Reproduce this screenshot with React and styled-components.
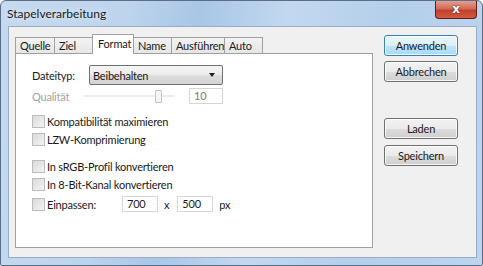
import React from "react";
import styled, { createGlobalStyle, css } from "styled-components";

const GlobalStyle = createGlobalStyle`
  html, body {
    margin: 0;
    padding: 0;
    background: #ffffff;
  }
  body {
    font-family: Lato, "Open Sans", "Liberation Sans", sans-serif;
    font-size: 11px;
    letter-spacing: -0.2px;
    color: #1a1a1a;
  }
`;

const Window = styled.div`
  width: 483px;
  height: 266px;
  box-sizing: border-box;
  border: 1px solid #5a6f87;
  border-radius: 6px 6px 2px 2px;
  background: linear-gradient(
    100deg,
    #c5daf0 0%,
    #bcd4ec 25%,
    #a9c6e6 38%,
    #c2d8ef 55%,
    #b4cfeb 75%,
    #bdd5ee 100%
  );
  display: flex;
  flex-direction: column;
  overflow: hidden;
`;

const TitleBar = styled.div`
  height: 25px;
  display: flex;
  align-items: flex-start;
  justify-content: space-between;
  padding-left: 6px;
`;

const Title = styled.span`
  margin-top: 5px;
  font-size: 12px;
  letter-spacing: 0;
  color: #1a1a1a;
  text-shadow: 0 0 6px rgba(255, 255, 255, 0.9);
`;

const CloseButton = styled.div`
  width: 42px;
  height: 18px;
  margin-right: 5px;
  box-sizing: border-box;
  border: 1px solid #5e1f1a;
  border-top: none;
  border-radius: 0 0 4px 4px;
  background: linear-gradient(#e2a090 0%, #d26a56 45%, #c2412b 55%, #d05a3e 100%);
  color: #ffffff;
  font-family: "DejaVu Sans", sans-serif;
  font-weight: bold;
  font-size: 12px;
  line-height: 16px;
  text-align: center;
  text-shadow: 0 0 2px #4a120c;
`;

const Client = styled.div`
  flex: 1;
  margin: 0 5px 7px 7px;
  background: #f0f0f0;
  border: 1px solid #97adc6;
  display: flex;
  padding: 7px 18px 9px 6px;
`;

const TabArea = styled.div`
  width: 358px;
  display: flex;
  flex-direction: column;
`;

const TabStrip = styled.div`
  height: 19px;
  display: flex;
  align-items: flex-end;
  padding-left: 1px;
  position: relative;
  z-index: 1;
`;

const Tab = styled.div`
  box-sizing: border-box;
  height: 16px;
  width: ${(p) => p.w}px;
  border: 1px solid #a0a0a0;
  border-bottom: none;
  margin-left: -1px;
  padding-left: 4px;
  line-height: 15px;
  white-space: nowrap;
  background: linear-gradient(#f3f3f3, #e6e6e6);

  ${(p) =>
    p.active &&
    css`
      height: 20px;
      margin-bottom: -1px;
      background: #ffffff;
      padding-left: 5px;
      line-height: 17px;
      z-index: 2;
      position: relative;
    `}
`;

const Panel = styled.div`
  flex: 1;
  box-sizing: border-box;
  background: #ffffff;
  border: 1px solid #a0a0a0;
  padding: 11px 0 0 16px;
  display: flex;
  flex-direction: column;
`;

const FieldRow = styled.div`
  display: flex;
  align-items: center;
  height: ${(p) => p.h || 18}px;
  margin-top: ${(p) => p.mt || 0}px;
`;

const Label = styled.span`
  width: ${(p) => p.w}px;
  color: ${(p) => (p.disabled ? "#a3a3a3" : "#1a1a1a")};
  white-space: nowrap;
`;

const Select = styled.div`
  box-sizing: border-box;
  width: 134px;
  height: 20px;
  border: 1px solid #707070;
  border-radius: 2px;
  background: linear-gradient(#f4f4f4 0%, #ececec 50%, #dedede 51%, #d3d3d3 100%);
  display: flex;
  align-items: center;
  justify-content: space-between;
  padding: 0 7px 0 3px;
`;

const Arrow = styled.span`
  width: 0;
  height: 0;
  border-left: 3.5px solid transparent;
  border-right: 3.5px solid transparent;
  border-top: 4px solid #1e1e1e;
`;

const Slider = styled.div`
  width: 90px;
  height: 16px;
  margin: 0 15px 0 -5px;
  position: relative;
  display: flex;
  align-items: center;
`;

const Track = styled.div`
  width: 100%;
  height: 2px;
  background: #e2e2e2;
  border: 1px solid #ededed;
  box-sizing: border-box;
`;

const Thumb = styled.div`
  position: absolute;
  left: 71px;
  top: 2px;
  width: 5px;
  height: 11px;
  border: 1px solid #c4c4c4;
  border-radius: 1px;
  background: #f4f4f4;
`;

const TextBox = styled.div`
  box-sizing: border-box;
  width: ${(p) => p.w}px;
  height: 16px;
  border: 1px solid #d6d6d6;
  background: #ffffff;
  padding-left: 4px;
  line-height: 14px;
  color: ${(p) => (p.disabled ? "#7a7a7a" : "#1a1a1a")};
`;

const Check = styled.span`
  box-sizing: border-box;
  width: 13px;
  height: 13px;
  border: 1px solid #bcbcbc;
  background: linear-gradient(135deg, #dadada, #f3f3f3);
  margin-right: 2px;
  flex: none;
`;

const Small = styled.span`
  margin: 0 ${(p) => p.mr || 0}px 0 ${(p) => p.ml || 0}px;
`;

const ButtonColumn = styled.div`
  margin-left: 11px;
  margin-top: 1px;
  display: flex;
  flex-direction: column;
  gap: 5px;
`;

const Button = styled.div`
  box-sizing: border-box;
  width: 74px;
  height: 21px;
  border: 1px solid ${(p) => (p.primary ? "#3c7fb1" : "#707070")};
  border-radius: 3px;
  background: ${(p) =>
    p.primary
      ? "linear-gradient(#eaf6fd 0%, #d9f0fc 50%, #bee6fd 51%, #a7d9f5 100%)"
      : "linear-gradient(#f2f2f2 0%, #ebebeb 50%, #dddddd 51%, #cfcfcf 100%)"};
  box-shadow: inset 0 0 0 1px rgba(255, 255, 255, 0.8);
  text-align: center;
  line-height: 19px;
  margin-top: ${(p) => p.mt || 0}px;
`;

const tabs = [
  { name: "Quelle", w: 40 },
  { name: "Ziel", w: 39 },
  { name: "Format", w: 42, active: true },
  { name: "Name", w: 39 },
  { name: "Ausführen", w: 54 },
  { name: "Auto", w: 39 },
];

const checkRows = [
  { label: "Kompatibilität maximieren", mt: 8 },
  { label: "LZW-Komprimierung" },
  { label: "In sRGB-Profil konvertieren", mt: 9 },
  { label: "In 8-Bit-Kanal konvertieren" },
];

export default function App() {
  return (
    <>
      <GlobalStyle />
      <Window>
        <TitleBar>
          <Title>Stapelverarbeitung</Title>
          <CloseButton>x</CloseButton>
        </TitleBar>
        <Client>
          <TabArea>
            <TabStrip>
              {tabs.map((t) => (
                <Tab key={t.name} w={t.w} active={t.active}>
                  {t.name}
                </Tab>
              ))}
            </TabStrip>
            <Panel>
              <FieldRow h={20}>
                <Label w={57}>Dateityp:</Label>
                <Select>
                  <span>Beibehalten</span>
                  <Arrow />
                </Select>
              </FieldRow>
              <FieldRow h={16} mt={3}>
                <Label w={57} disabled>
                  Qualität
                </Label>
                <Slider>
                  <Track />
                  <Thumb />
                </Slider>
                <TextBox w={34} disabled>
                  10
                </TextBox>
              </FieldRow>
              {checkRows.map((r) => (
                <FieldRow key={r.label} mt={r.mt}>
                  <Check />
                  <span>{r.label}</span>
                </FieldRow>
              ))}
              <FieldRow h={18} mt={2}>
                <Check />
                <Label w={75}>Einpassen:</Label>
                <TextBox w={36}>700</TextBox>
                <Small ml={6} mr={8}>
                  x
                </Small>
                <TextBox w={36}>500</TextBox>
                <Small ml={6}>px</Small>
              </FieldRow>
            </Panel>
          </TabArea>
          <ButtonColumn>
            <Button primary>Anwenden</Button>
            <Button>Abbrechen</Button>
            <Button mt={31}>Laden</Button>
            <Button mt={1}>Speichern</Button>
          </ButtonColumn>
        </Client>
      </Window>
    </>
  );
}
